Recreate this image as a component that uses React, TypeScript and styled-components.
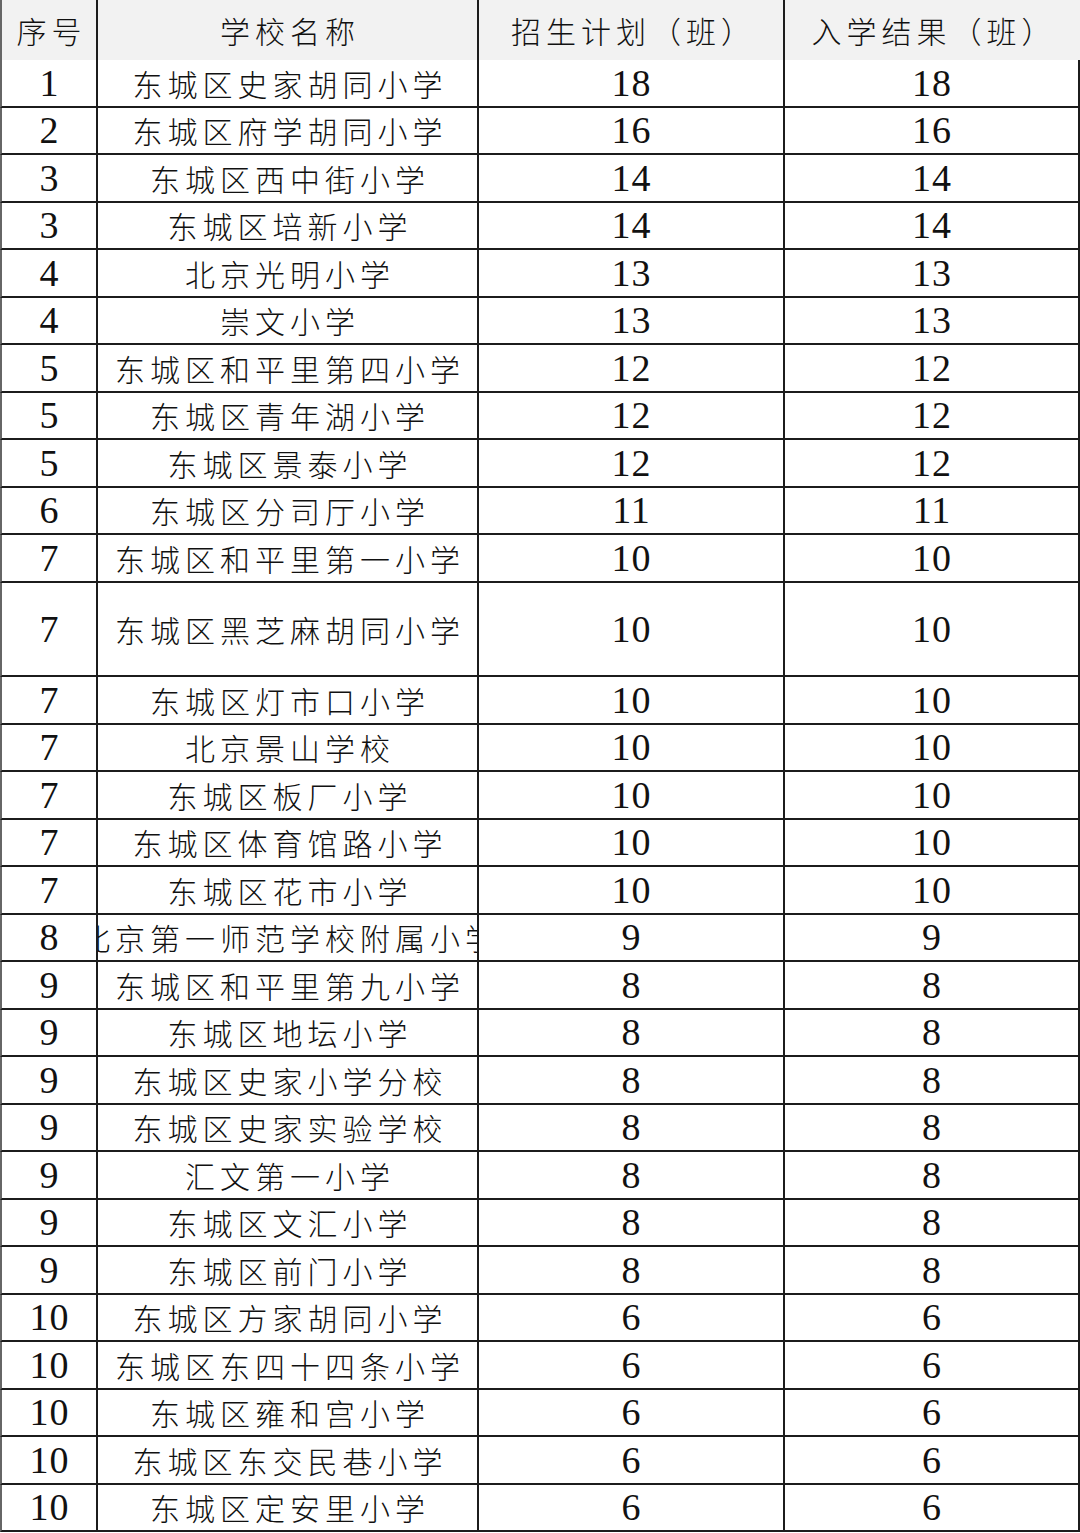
import React from 'react';
import { createGlobalStyle, styled } from 'styled-components';

const GlobalStyle = createGlobalStyle`
    html, body {
        margin: 0;
        padding: 0;
        background: #ffffff;
    }
`;

const Table = styled.div`
    display: grid;
    grid-template-columns: 98px 381px 306px 295px;
    width: 1080px;

    font-family: 'Liberation Serif', 'Noto Sans CJK SC', serif;
    color: #111111;
`;

const Cell = styled.div<{ $head?: boolean; $last?: boolean; $tall?: boolean; $num?: boolean }>`
    display: flex;
    box-sizing: border-box;
    height: ${(p) => (p.$head ? '60px' : p.$tall ? '94.5px' : '47.5px')};
    overflow: hidden;

    background-color: ${(p) => (p.$head ? '#f2f2f2' : '#ffffff')};
    border-right: 2px solid ${(p) => (p.$last && p.$head ? 'transparent' : '#1c1c1c')};
    border-bottom: ${(p) => (p.$head ? 'none' : '2px solid #1c1c1c')};

    white-space: nowrap;
    font-size: ${(p) => (p.$num ? '38px' : '30px')};
    font-weight: 300;
    letter-spacing: ${(p) => (p.$num ? '1px' : '5px')};
    text-indent: ${(p) => (p.$num ? '1px' : '5px')};

    justify-content: center;
    align-items: center;

    &:nth-child(4n + 1) {
        border-left: 2px solid #666666;
    }
`;

const rows: [string, string, string, string][] = [
    ['1', '东城区史家胡同小学', '18', '18'],
    ['2', '东城区府学胡同小学', '16', '16'],
    ['3', '东城区西中街小学', '14', '14'],
    ['3', '东城区培新小学', '14', '14'],
    ['4', '北京光明小学', '13', '13'],
    ['4', '崇文小学', '13', '13'],
    ['5', '东城区和平里第四小学', '12', '12'],
    ['5', '东城区青年湖小学', '12', '12'],
    ['5', '东城区景泰小学', '12', '12'],
    ['6', '东城区分司厅小学', '11', '11'],
    ['7', '东城区和平里第一小学', '10', '10'],
    ['7', '东城区黑芝麻胡同小学', '10', '10'],
    ['7', '东城区灯市口小学', '10', '10'],
    ['7', '北京景山学校', '10', '10'],
    ['7', '东城区板厂小学', '10', '10'],
    ['7', '东城区体育馆路小学', '10', '10'],
    ['7', '东城区花市小学', '10', '10'],
    ['8', '北京第一师范学校附属小学', '9', '9'],
    ['9', '东城区和平里第九小学', '8', '8'],
    ['9', '东城区地坛小学', '8', '8'],
    ['9', '东城区史家小学分校', '8', '8'],
    ['9', '东城区史家实验学校', '8', '8'],
    ['9', '汇文第一小学', '8', '8'],
    ['9', '东城区文汇小学', '8', '8'],
    ['9', '东城区前门小学', '8', '8'],
    ['10', '东城区方家胡同小学', '6', '6'],
    ['10', '东城区东四十四条小学', '6', '6'],
    ['10', '东城区雍和宫小学', '6', '6'],
    ['10', '东城区东交民巷小学', '6', '6'],
    ['10', '东城区定安里小学', '6', '6'],
];

const headers = ['序号', '学校名称', '招生计划（班）', '入学结果（班）'];

const App: React.FC = () => {
    return (
        <>
            <GlobalStyle />
            <Table>
                {headers.map((h, i) => (
                    <Cell key={h} $head $last={i === 3}>
                        {h}
                    </Cell>
                ))}
                {rows.map((r, idx) => {
                    const tall = r[1] === '东城区黑芝麻胡同小学';
                    return (
                        <React.Fragment key={idx}>
                            <Cell $num $tall={tall}>
                                {r[0]}
                            </Cell>
                            <Cell $tall={tall}>{r[1]}</Cell>
                            <Cell $num $tall={tall}>
                                {r[2]}
                            </Cell>
                            <Cell $num $last $tall={tall}>
                                {r[3]}
                            </Cell>
                        </React.Fragment>
                    );
                })}
            </Table>
        </>
    );
};

export default App;
